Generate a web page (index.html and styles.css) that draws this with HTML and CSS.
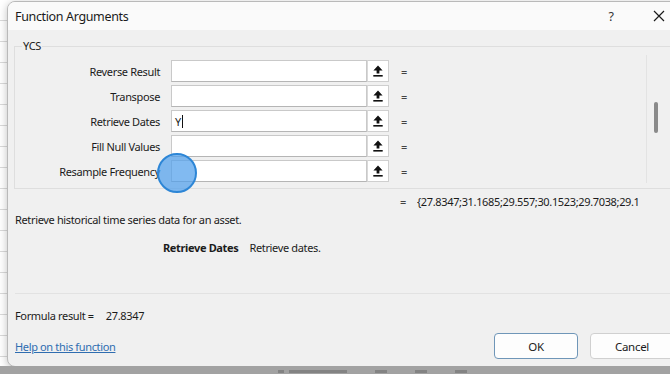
FILE: index.html
```html
<!DOCTYPE html>
<html>
<head>
<meta charset="utf-8">
<link rel="stylesheet" href="styles.css">
</head>
<body>
<div class="dialog">
  <div class="titlebar">
    <span class="title">Function Arguments</span>
    <span class="help">?</span>
    <span class="close"><svg width="12" height="12" viewBox="0 0 12 12"><path d="M1 1 L11 11 M11 1 L1 11" stroke="#1a1a1a" stroke-width="1.2" fill="none"/></svg></span>
  </div>
  <div class="content">
    <div class="group">
      <div class="legend">YCS</div>
      <div class="pane">
        <div class="rows">
          <div class="row"><span class="lbl">Reverse Result</span><div class="field"><div class="input"></div><div class="ref"><svg width="10" height="12" viewBox="0 0 10 12"><path d="M5 0.5 L9.6 5.6 H6.4 V8.6 H3.6 V5.6 H0.4 Z" fill="#111"/><rect x="0.3" y="10" width="9.4" height="1.6" fill="#111"/></svg></div></div><span class="eq">=</span></div>
          <div class="row"><span class="lbl">Transpose</span><div class="field"><div class="input"></div><div class="ref"><svg width="10" height="12" viewBox="0 0 10 12"><path d="M5 0.5 L9.6 5.6 H6.4 V8.6 H3.6 V5.6 H0.4 Z" fill="#111"/><rect x="0.3" y="10" width="9.4" height="1.6" fill="#111"/></svg></div></div><span class="eq">=</span></div>
          <div class="row"><span class="lbl">Retrieve Dates</span><div class="field"><div class="input">Y<span class="caret"></span></div><div class="ref"><svg width="10" height="12" viewBox="0 0 10 12"><path d="M5 0.5 L9.6 5.6 H6.4 V8.6 H3.6 V5.6 H0.4 Z" fill="#111"/><rect x="0.3" y="10" width="9.4" height="1.6" fill="#111"/></svg></div></div><span class="eq">=</span></div>
          <div class="row"><span class="lbl">Fill Null Values</span><div class="field"><div class="input"></div><div class="ref"><svg width="10" height="12" viewBox="0 0 10 12"><path d="M5 0.5 L9.6 5.6 H6.4 V8.6 H3.6 V5.6 H0.4 Z" fill="#111"/><rect x="0.3" y="10" width="9.4" height="1.6" fill="#111"/></svg></div></div><span class="eq">=</span></div>
          <div class="row"><span class="lbl">Resample Frequency</span><div class="field"><div class="input"></div><div class="ref"><svg width="10" height="12" viewBox="0 0 10 12"><path d="M5 0.5 L9.6 5.6 H6.4 V8.6 H3.6 V5.6 H0.4 Z" fill="#111"/><rect x="0.3" y="10" width="9.4" height="1.6" fill="#111"/></svg></div></div><span class="eq">=</span></div>
        </div>
        <div class="track"><div class="thumb"></div></div>
      </div>
    </div>
    <div class="value-row"><span class="eq2">=</span><span class="val">{27.8347;31.1685;29.557;30.1523;29.7038;29.1685;30.2}</span></div>
    <div class="desc">Retrieve historical time series data for an asset.</div>
    <div class="argdesc"><b>Retrieve Dates</b><span>Retrieve dates.</span></div>
    <div class="sep"></div>
    <div class="result"><span>Formula result =</span><span>27.8347</span></div>
    <div class="footer">
      <a class="link" href="#">Help on this function</a>
      <div class="buttons"><button class="btn ok">OK</button><button class="btn">Cancel</button></div>
    </div>
  </div>
</div>
<div class="marker"></div>
<div class="taskbar"><span class="tb-blob w1"></span><span class="tb-blob w2"></span><span class="tb-blob w3"></span><span class="tb-blob w3"></span><span class="tb-blob w3"></span></div>
</body>
</html>
```
FILE: styles.css
```css
html, body { margin: 0; padding: 0; }
body {
  width: 670px; height: 374px; overflow: hidden; position: relative;
  background: #ffffff repeating-linear-gradient(to bottom, transparent 0, transparent 20px, #dadada 20px, #dadada 21px);
  font-family: "Noto Sans", sans-serif;
  font-size: 11px; letter-spacing: -0.35px; color: #1b1b1b;
}
.dialog {
  position: absolute; left: 7px; top: 1px; width: 690px; height: 364px;
  border: 1px solid #b9b9b9; border-radius: 8px;
  background: #f0f0f0; overflow: hidden;
  box-shadow: 0 2px 8px rgba(0,0,0,0.25);
  display: flex; flex-direction: column;
}
.titlebar {
  height: 28px; background: #fafafa; display: flex; align-items: center;
  padding: 0 29px 0 7px; flex: none;
}
.title { font-size: 12.5px; flex: 1; }
.help { width: 20px; flex: none; text-align: center; font-size: 12.5px; color: #333; margin-right: 28px; }
.close { width: 20px; flex: none; display: flex; align-items: center; justify-content: center; }
.content { display: flex; flex-direction: column; padding-top: 16px; }
.group {
  margin-left: 6px; border-top: 1px solid #dedede; border-left: 1px solid #dedede; border-bottom: 1px solid #dedede;
}
.legend { margin: -8px 0 0 7px; width: fit-content; padding: 0 1px; background: #f0f0f0; line-height: 14px; }
.pane { display: flex; margin-top: 2px; height: 133px; }
.rows { width: 631px; padding-top: 5px; display: flex; flex-direction: column; gap: 3px; }
.row { display: flex; align-items: center; height: 22px; }
.lbl { width: 145px; text-align: right; white-space: nowrap; margin-right: 11px; }
.field { display: flex; width: 218px; height: 22px; }
.input {
  flex: 1; background: #fff; border: 1px solid #c9c9c9; border-bottom-color: #b5b5b5;
  display: flex; align-items: center; padding-left: 3px;
}
.caret { width: 1px; height: 13px; background: #111; margin-left: 1px; }
.ref {
  width: 20px; background: #fff; border: 1px solid #cfcfcf; border-left-color: #d9d9d9;
  display: flex; align-items: center; justify-content: center;
}
.eq { margin-left: 12px; color: #444; }
.track { border-left: 1px solid #e3e3e3; width: 30px; margin-bottom: 5px; }
.thumb { margin: 47px 0 0 7px; width: 4px; height: 31px; background: #8a8a8a; border-radius: 2px; }
.value-row { display: flex; margin: 4px 0 0 392px; height: 16px; align-items: center; }
.eq2 { color: #444; width: 17px; }
.val { width: 221px; overflow: hidden; white-space: nowrap; }
.desc { margin: 3px 0 0 7px; line-height: 16px; }
.argdesc { margin: 12px 0 0 155px; display: flex; gap: 11px; line-height: 16px; }
.argdesc b { font-weight: 700; }
.sep { margin: 37px 0 0 7px; height: 1px; background: #e2e2e2; }
.result { margin: 14px 0 0 7px; display: flex; gap: 12px; line-height: 16px; }
.footer { display: flex; align-items: center; margin: 9px 0 0 7px; height: 26px; }
.link { color: #2f6db0; text-decoration: underline; width: 479px; }
.buttons { display: flex; gap: 12px; }
.btn {
  width: 84px; height: 26px; background: #fdfdfd; border: 1px solid #d0d0d0; border-radius: 4px;
  font-family: inherit; font-size: 11.5px; letter-spacing: -0.3px; color: #1b1b1b; padding: 0;
}
.btn.ok { border-color: #6f96b8; }
.marker {
  position: absolute; left: 157px; top: 153px; width: 36px; height: 36px; border-radius: 50%;
  background: rgba(80,160,235,0.72); border: 2px solid #2d86d6;
}
.taskbar {
  position: absolute; left: 0; top: 366px; width: 670px; height: 8px; background: #a2a2a2;
  display: flex; align-items: flex-start; overflow: hidden;
}
.tb-blob { height: 3px; background: #6e6e6e; margin-top: 4px; opacity: 0.6; }
.w1 { width: 6px; margin-left: 278px; }
.w2 { width: 58px; margin-left: 5px; }
.w3 { width: 12px; margin-left: 28px; }
```
